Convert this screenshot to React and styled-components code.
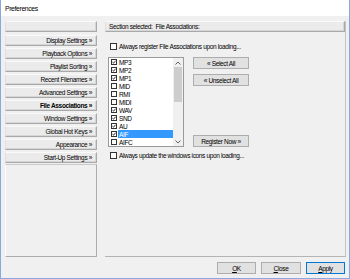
import React from "react";
import styled, { createGlobalStyle, css } from "styled-components";

const Global = createGlobalStyle`
  html, body { margin: 0; padding: 0; background: #f0f0f0; }
  body { font-family: "Liberation Sans", Arial, sans-serif; }
  * { box-sizing: border-box; }
`;

const Window = styled.div`
  width: 350px;
  height: 279px;
  background: #f0f0f0;
  border-left: 1px solid #86aae0;
  border-right: 1px solid #86aae0;
  border-bottom: 1px solid #86aae0;
  display: flex;
  flex-direction: column;
  font-family: "Liberation Sans", Arial, sans-serif;
  font-size: 6.5px;
  letter-spacing: -0.35px;
  color: #000;
  overflow: hidden;
`;

const TitleBar = styled.div`
  height: 16px;
  background: #fff;
  display: flex;
  align-items: center;
  padding-left: 4px;
  font-size: 6.8px;
`;

const Body = styled.div`
  flex: 1;
  display: flex;
  flex-direction: column;
  padding: 5px 3px 4px 4px;
`;

const Main = styled.div`
  height: 236px;
  display: flex;
  gap: 8px;
`;

const LeftCol = styled.div`
  width: 92px;
  display: flex;
  flex-direction: column;
  gap: 2px;
`;

const raised = css`
  background: #ebebeb;
  border: 1px solid;
  border-color: #fafafa #a9a9a9 #a9a9a9 #e0e0e0;
  box-shadow: inset -1px -1px 0 #d6d6d6;
`;

const NavButton = styled.div`
  ${raised};
  height: 11px;
  flex: none;
  display: flex;
  align-items: center;
  justify-content: flex-end;
  padding-right: 4px;
  font-weight: ${(p) => (p.$active ? 700 : 400)};
  margin-bottom: ${(p) => (p.$blank ? "1px" : "0")};
`;

const NavPanel = styled.div`
  flex: 1;
  margin-top: -1px;
  border: 1px solid;
  border-color: #c9c9c9 #acacac #acacac #fdfdfd;
  background: #f0f0f0;
`;

const RightCol = styled.div`
  width: 241px;
  display: flex;
  flex-direction: column;
  border-right: 1px solid #c4c4c4;
  border-bottom: 1px solid #b4b4b4;
`;

const SectionBox = styled.div`
  ${raised};
  height: 11px;
  display: flex;
  align-items: center;
  padding-left: 3px;
`;

const Content = styled.div`
  padding-left: 3px;
  display: flex;
  flex-direction: column;
`;

const CheckRow = styled.label`
  display: flex;
  align-items: center;
  gap: 2px;
  height: 9px;
  padding-left: 2px;
  margin-top: ${(p) => p.$mt || 0}px;
`;

const Box = styled.span`
  width: ${(p) => p.$size}px;
  height: ${(p) => p.$size}px;
  flex: none;
  background: #fff;
  border: 1px solid #333;
  display: flex;
  align-items: center;
  justify-content: center;
`;

const Check = ({ checked, size = 7 }) => (
  <Box $size={size}>
    {checked && (
      <svg width={size - 2} height={size - 2} viewBox="0 0 10 10">
        <path d="M1 5.2 L4 8 L9 1.8" fill="none" stroke="#000" strokeWidth="2" />
      </svg>
    )}
  </Box>
);

const ListArea = styled.div`
  display: flex;
  gap: 9px;
  margin-top: 6px;
  height: 90px;
`;

const ListBox = styled.div`
  width: 76px;
  height: 90px;
  background: #fff;
  border: 1px solid #9a9a9a;
  display: flex;
`;

const Rows = styled.div`
  flex: 1;
  display: flex;
  flex-direction: column;
`;

const Row = styled.div`
  height: 8px;
  display: flex;
  align-items: center;
  padding-left: 2px;
  gap: 1px;
`;

const RowLabel = styled.span`
  flex: 1;
  height: 8px;
  display: flex;
  align-items: center;
  padding-left: 1px;
  background: ${(p) => (p.$sel ? "#3399ff" : "transparent")};
  color: ${(p) => (p.$sel ? "#fff" : "#000")};
`;

const ScrollBar = styled.div`
  width: 10px;
  background: #f0f0f0;
  display: flex;
  flex-direction: column;
  align-items: center;
`;

const Arrow = styled.div`
  height: 9px;
  width: 10px;
  display: flex;
  align-items: center;
  justify-content: center;
`;

const Thumb = styled.div`
  width: 8px;
  height: 35px;
  background: #cdcdcd;
`;

const ScrollSpace = styled.div`
  flex: 1;
`;

const BtnCol = styled.div`
  width: 56px;
  display: flex;
  flex-direction: column;
  gap: 5px;
`;

const Button = styled.div`
  height: ${(p) => p.$h || 12}px;
  width: ${(p) => (p.$w ? p.$w + "px" : "auto")};
  background: #e1e1e1;
  border: 1px solid ${(p) => (p.$focus ? "#0078d7" : "#adadad")};
  box-shadow: ${(p) => (p.$focus ? "inset 0 0 0 1px #e1e1e1" : "none")};
  display: flex;
  align-items: center;
  justify-content: center;
  flex: none;
  margin-top: ${(p) => (p.$push ? "auto" : "0")};
`;

const Footer = styled.div`
  margin-top: 5px;
  display: flex;
  justify-content: flex-end;
  gap: 5px;
  padding-right: 1px;
`;

const U = styled.span`
  text-decoration: underline;
`;

const navItems = [
  "Display Settings »",
  "Playback Options »",
  "Playlist Sorting »",
  "Recent Filenames »",
  "Advanced Settings »",
  "File Associations »",
  "Window Settings »",
  "Global Hot Keys »",
  "Appearance »",
  "Start-Up Settings »",
];

const formats = [
  ["MP3", true],
  ["MP2", true],
  ["MP1", true],
  ["MID", false],
  ["RMI", false],
  ["MIDI", false],
  ["WAV", true],
  ["SND", true],
  ["AU", true],
  ["AIF", true, true],
  ["AIFC", false],
];

const Chevron = ({ up }) => (
  <svg width="6" height="4" viewBox="0 0 6 4">
    <path
      d={up ? "M0.5 3.5 L3 1 L5.5 3.5" : "M0.5 0.5 L3 3 L5.5 0.5"}
      fill="none"
      stroke="#606060"
      strokeWidth="1"
    />
  </svg>
);

export default function App() {
  return (
    <>
      <Global />
      <Window>
        <TitleBar>Preferences</TitleBar>
        <Body>
          <Main>
            <LeftCol>
              <NavButton $blank />
              {navItems.map((t) => (
                <NavButton key={t} $active={t.startsWith("File")}>
                  {t}
                </NavButton>
              ))}
              <NavPanel />
            </LeftCol>
            <RightCol>
              <SectionBox>Section selected:&nbsp; File Associations:</SectionBox>
              <Content>
                <CheckRow $mt={10}>
                  <Check />
                  <span>Always register File Associations upon loading...</span>
                </CheckRow>
                <ListArea>
                  <ListBox>
                    <Rows>
                      {formats.map(([name, on, sel]) => (
                        <Row key={name}>
                          <Check checked={on} size={6} />
                          <RowLabel $sel={sel}>{name}</RowLabel>
                        </Row>
                      ))}
                    </Rows>
                    <ScrollBar>
                      <Arrow>
                        <Chevron up />
                      </Arrow>
                      <Thumb />
                      <ScrollSpace />
                      <Arrow>
                        <Chevron />
                      </Arrow>
                    </ScrollBar>
                  </ListBox>
                  <BtnCol>
                    <Button>« Select All</Button>
                    <Button>« Unselect All</Button>
                    <Button $push>Register Now »</Button>
                  </BtnCol>
                </ListArea>
                <CheckRow $mt={4}>
                  <Check />
                  <span>Always update the windows icons upon loading...</span>
                </CheckRow>
              </Content>
            </RightCol>
          </Main>
          <Footer>
            <Button $w={39}>
              <U>O</U>K
            </Button>
            <Button $w={40}>
              <U>C</U>lose
            </Button>
            <Button $w={39} $focus>
              <U>A</U>pply
            </Button>
          </Footer>
        </Body>
      </Window>
    </>
  );
}
